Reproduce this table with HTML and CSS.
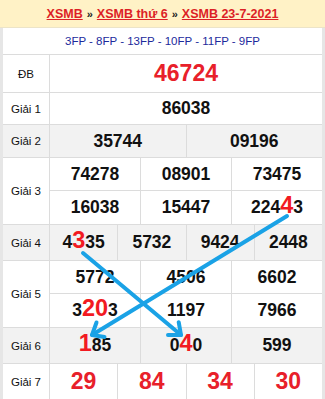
FILE: index.html
```html
<!DOCTYPE html>
<html lang="vi">
<head>
<meta charset="utf-8">
<link rel="stylesheet" href="styles.css">
</head>
<body>
<div class="page">
  <div class="head">
    <a href="#">XSMB</a><span class="sep">»</span><a href="#">XSMB thứ 6</a><span class="sep">»</span><a href="#">XSMB 23-7-2021</a>
  </div>
  <div class="table">
    <div class="fp">3FP - 8FP - 13FP - 10FP - 11FP - 9FP</div>

    <div class="row c1 h-db">
      <div class="lbl">ĐB</div>
      <div class="cell red big">46724</div>
    </div>

    <div class="row c1 h-32">
      <div class="lbl">Giải 1</div>
      <div class="cell">86038</div>
    </div>

    <div class="row c2 h-33 gray">
      <div class="lbl">Giải 2</div>
      <div class="cell">35744</div>
      <div class="cell">09196</div>
    </div>

    <div class="row c3 tall">
      <div class="lbl">Giải 3</div>
      <div class="cell top">74278</div>
      <div class="cell top">08901</div>
      <div class="cell top">73475</div>
      <div class="cell">16038</div>
      <div class="cell">15447</div>
      <div class="cell">224<span class="hl">4</span>3</div>
    </div>

    <div class="row c4 h-36 gray">
      <div class="lbl">Giải 4</div>
      <div class="cell">4<span class="hl">3</span>35</div>
      <div class="cell">5732</div>
      <div class="cell">9424</div>
      <div class="cell">2448</div>
    </div>

    <div class="row c3 tall">
      <div class="lbl">Giải 5</div>
      <div class="cell top">5772</div>
      <div class="cell top">4506</div>
      <div class="cell top">6602</div>
      <div class="cell">3<span class="hl">20</span>3</div>
      <div class="cell">1197</div>
      <div class="cell">7966</div>
    </div>

    <div class="row c3 h-36 gray">
      <div class="lbl">Giải 6</div>
      <div class="cell"><span class="hl">1</span>85</div>
      <div class="cell">0<span class="hl">4</span>0</div>
      <div class="cell">599</div>
    </div>

    <div class="row c4 h-36">
      <div class="lbl">Giải 7</div>
      <div class="cell red big">29</div>
      <div class="cell red big">84</div>
      <div class="cell red big">34</div>
      <div class="cell red big">30</div>
    </div>
  </div>

  <svg class="arrows" width="325" height="399" viewBox="0 0 325 399">
    <g fill="none" stroke="#1aa2e6" stroke-width="4" stroke-linecap="round" stroke-linejoin="round">
      <path d="M287 216 L92 335"/>
      <path d="M96.5 322.5 L92 335 L104.5 337"/>
      <path d="M83 253 L181 335"/>
      <path d="M168 335 L181 335 L178.7 322.2"/>
    </g>
  </svg>
</div>
</body>
</html>
```
FILE: styles.css
```css
* { box-sizing: border-box; }

body {
  margin: 0;
  background: #fff;
  font-family: "Liberation Sans", Arial, sans-serif;
  color: #111;
}

.page {
  position: relative;
  width: 325px;
  overflow: hidden;
}

.head {
  height: 28px;
  background: #fff2c6;
  border-bottom: 1px solid #ece4c8;
  display: flex;
  align-items: center;
  justify-content: center;
  font-size: 12.5px;
  font-weight: bold;
}

.head a {
  color: #dc1f26;
  text-decoration: underline;
}

.head .sep {
  color: #222;
  font-size: 11px;
  margin: 0 4px;
}

.table {
  border-left: 3px solid #e6e6e6;
  border-right: 3px solid #e6e6e6;
}

.fp {
  height: 27px;
  border-bottom: 1px solid #dcdcdc;
  display: flex;
  align-items: center;
  justify-content: center;
  color: #1b2a9c;
  font-size: 11.5px;
}

.row {
  display: grid;
  border-bottom: 1px solid #dcdcdc;
}

.c1 { grid-template-columns: 46px 1fr; }
.c2 { grid-template-columns: 46px repeat(2, 1fr); }
.c3 { grid-template-columns: 46px repeat(3, 1fr); }
.c4 { grid-template-columns: 46px repeat(4, 1fr); }

.h-db { height: 38px; }
.h-32 { height: 32px; }
.h-33 { height: 33px; }
.h-36 { height: 36px; }

.tall {
  height: 67px;
  grid-template-rows: 33px 33px;
}

.tall .lbl { grid-row: 1 / 3; }

.gray { background: #f2f2f2; }

.lbl {
  display: flex;
  align-items: center;
  justify-content: center;
  font-size: 11.5px;
  color: #111;
}

.cell {
  border-left: 1px solid #dcdcdc;
  display: flex;
  align-items: center;
  justify-content: center;
  font-size: 17.5px;
  font-weight: bold;
  color: #111;
}

.cell.top { border-bottom: 1px solid #dcdcdc; }

.red { color: #e8202a; }

.big { font-size: 23px; }

.hl {
  color: #f21a22;
  font-size: 23.5px;
  line-height: 1;
  position: relative;
  top: -2px;
}

.arrows {
  position: absolute;
  left: 0;
  top: 0;
  pointer-events: none;
}
```
